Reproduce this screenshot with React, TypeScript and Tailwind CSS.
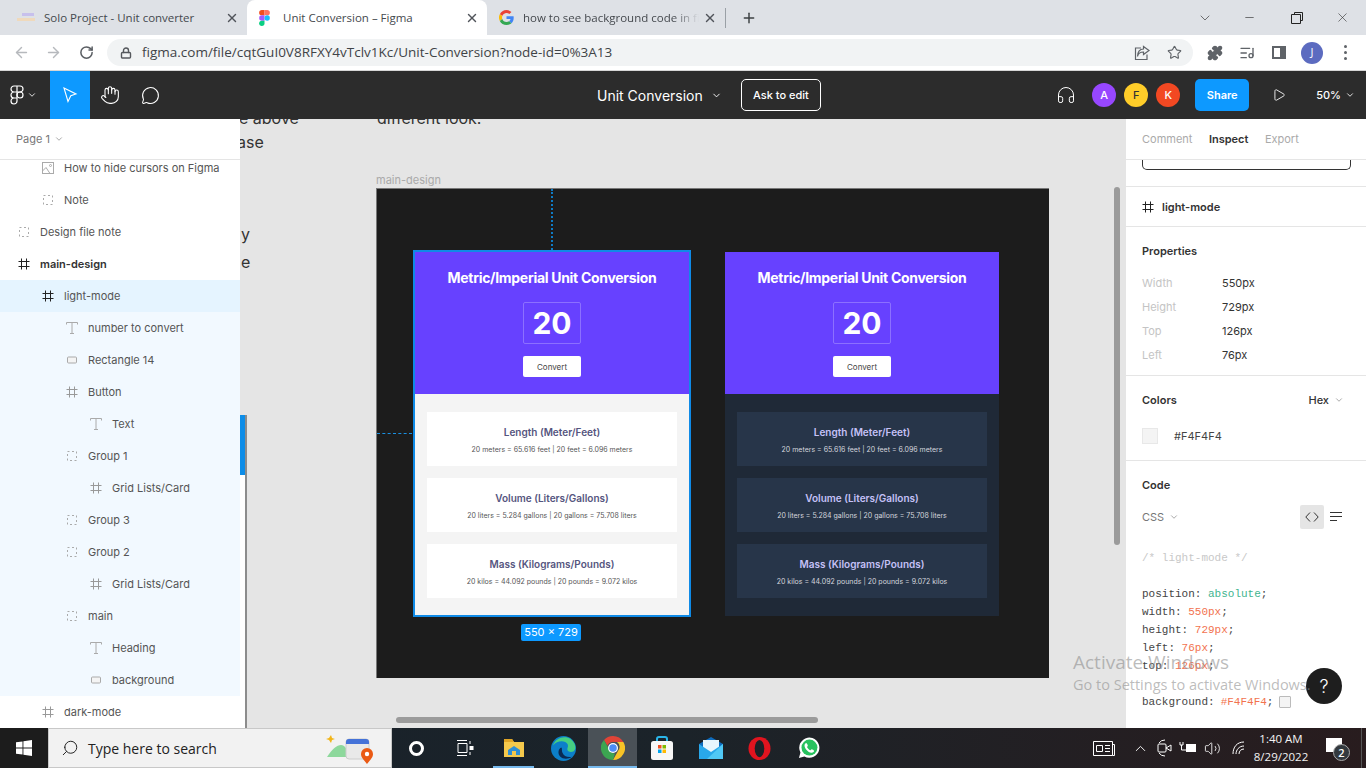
import { ArrowLeft, ArrowRight, ChevronDown, ChevronUp, Hand, Headphones, ListMusic, Lock, MessageCircle, Minus, Play, Plus, Puzzle, RotateCw, Search, Star, Volume2, X } from "lucide-react";
import type { ReactNode } from "react";

function FigmaLogo({ mono = false }: { mono?: boolean }) {
    if (mono) {
        return (
            <svg width="14" height="20" viewBox="0 0 14 20" fill="none" stroke="white" strokeWidth="1.2">
                <path d="M7 1H4a3 3 0 0 0 0 6h3zM7 1h3a3 3 0 0 1 0 6H7zM7 7H4a3 3 0 0 0 0 6h3zM7 13H4a3 3 0 1 0 3 3z" />
                <circle cx="10" cy="10" r="3" />
            </svg>
        );
    }
    return (
        <svg width="11" height="16" viewBox="0 0 12 18">
            <path d="M6 0H3a3 3 0 0 0 0 6h3z" fill="#f24e1e" />
            <path d="M6 0h3a3 3 0 0 1 0 6H6z" fill="#ff7262" />
            <path d="M6 6H3a3 3 0 0 0 0 6h3z" fill="#a259ff" />
            <circle cx="9" cy="9" r="3" fill="#1abcfe" />
            <path d="M6 12H3a3 3 0 1 0 3 3z" fill="#0acf83" />
        </svg>
    );
}

function GoogleG() {
    return (
        <svg width="15" height="15" viewBox="0 0 48 48">
            <path fill="#EA4335" d="M24 9.5c3.5 0 6.7 1.3 9.1 3.5l6.8-6.8C35.8 2.4 30.3 0 24 0 14.6 0 6.5 5.4 2.6 13.2l7.9 6.1C12.4 13.7 17.7 9.5 24 9.5z" />
            <path fill="#4285F4" d="M47 24.5c0-1.6-.2-3.2-.4-4.5H24v9h12.9c-.6 3-2.3 5.5-4.8 7.2l7.7 6C44.3 38 47 31.8 47 24.5z" />
            <path fill="#FBBC05" d="M10.5 28.7A14.5 14.5 0 0 1 10.5 19.3l-7.9-6.1a24 24 0 0 0 0 21.6z" />
            <path fill="#34A853" d="M24 48c6.5 0 11.9-2.1 15.8-5.8l-7.7-6c-2.1 1.4-4.9 2.3-8.1 2.3-6.3 0-11.6-4.2-13.5-9.8l-7.9 6.1C6.5 42.6 14.6 48 24 48z" />
        </svg>
    );
}

function Tab({ icon, title, active, fade, width, iconBox = "w-[24px]" }: { icon: ReactNode; title: string; active?: boolean; fade?: boolean; width: string; iconBox?: string }) {
    return (
        <div className={`flex items-center h-[35px] ${width} pl-[12px] pr-[8px] ${active ? "bg-white rounded-t-lg" : ""}`}>
            <div className={`${iconBox} flex shrink-0 items-center`}>{icon}</div>
            <span className={`flex-1 overflow-hidden whitespace-nowrap text-[11.5px] text-[#45494e] ${fade ? "[mask-image:linear-gradient(to_right,black_85%,transparent)]" : ""}`}>{title}</span>
            <X size={14} strokeWidth={2.4} className="text-[#50545a] ml-1 shrink-0" />
        </div>
    );
}

function Hash({ color = "#999", size = 14 }: { color?: string; size?: number }) {
    return (
        <svg width={size} height={size} viewBox="0 0 14 14" stroke={color} strokeWidth="1" fill="none">
            <path d="M4.5 1.5v11M9.5 1.5v11M1.5 4.5h11M1.5 9.5h11" />
        </svg>
    );
}

function LayerIcon({ kind }: { kind: string }) {
    if (kind === "hash") return <Hash />;
    if (kind === "hash-dark") return <Hash color="#222" />;
    if (kind === "text") {
        return (
            <svg width="14" height="14" viewBox="0 0 14 14" stroke="#aaa" fill="none">
                <path d="M1.5 3.5v-2h11v2M7 1.5v11M5 12.5h4" />
            </svg>
        );
    }
    if (kind === "rect") {
        return (
            <svg width="14" height="14" viewBox="0 0 14 14" stroke="#aaa" fill="#f4f4f4">
                <rect x="2.5" y="4" width="9" height="6" rx="1" />
            </svg>
        );
    }
    if (kind === "image") {
        return (
            <svg width="14" height="14" viewBox="0 0 14 14" stroke="#aaa" fill="none">
                <rect x="1.5" y="1.5" width="11" height="11" />
                <circle cx="9.5" cy="4.5" r="1" />
                <path d="M1.5 10 5 6.5l4 6" />
            </svg>
        );
    }
    return (
        <svg width="14" height="14" viewBox="0 0 14 14" stroke="#aaa" fill="none" strokeDasharray="2 2.5">
            <rect x="2.5" y="2.5" width="9" height="9" />
        </svg>
    );
}

const indent: Record<number, string> = { 0: "pl-[17px]", 1: "pl-[41px]", 2: "pl-[65px]", 3: "pl-[89px]" };

function LayerRow({ level, kind, name, bold, bg = "" }: { level: number; kind: string; name: string; bold?: boolean; bg?: string }) {
    return (
        <div className={`flex items-center h-[32px] gap-[9px] ${indent[level]} ${bg}`}>
            <LayerIcon kind={kind} />
            <span className={`text-[11px] ${bold ? "font-semibold text-[#333]" : "text-[#555]"}`}>{name}</span>
        </div>
    );
}

const selected = "bg-[#f2f9ff]";

function LeftPanel() {
    return (
        <aside className="w-[240px] shrink-0 bg-white flex flex-col overflow-hidden z-10">
            <div className="h-[40px] flex items-center pl-[16px] gap-[4px] text-[11px] text-[#777] shrink-0">
                Page 1 <ChevronDown size={10} className="text-[#999]" />
            </div>
            <div className="h-[1px] bg-[#e5e5e5] -mb-[8px] z-10 shrink-0" />
            <LayerRow level={1} kind="image" name="How to hide cursors on Figma" />
            <LayerRow level={1} kind="group" name="Note" />
            <LayerRow level={0} kind="group" name="Design file note" />
            <LayerRow level={0} kind="hash-dark" name="main-design" bold />
            <LayerRow level={1} kind="hash-dark" name="light-mode" bg="bg-[#e5f4ff]" />
            <LayerRow level={2} kind="text" name="number to convert" bg={selected} />
            <LayerRow level={2} kind="rect" name="Rectangle 14" bg={selected} />
            <LayerRow level={2} kind="hash" name="Button" bg={selected} />
            <LayerRow level={3} kind="text" name="Text" bg={selected} />
            <LayerRow level={2} kind="group" name="Group 1" bg={selected} />
            <LayerRow level={3} kind="hash" name="Grid Lists/Card" bg={selected} />
            <LayerRow level={2} kind="group" name="Group 3" bg={selected} />
            <LayerRow level={2} kind="group" name="Group 2" bg={selected} />
            <LayerRow level={3} kind="hash" name="Grid Lists/Card" bg={selected} />
            <LayerRow level={2} kind="group" name="main" bg={selected} />
            <LayerRow level={3} kind="text" name="Heading" bg={selected} />
            <LayerRow level={3} kind="rect" name="background" bg={selected} />
            <LayerRow level={1} kind="hash" name="dark-mode" />
        </aside>
    );
}

const conversions = [
    { title: "Length (Meter/Feet)", text: "20 meters = 65.616 feet | 20 feet = 6.096 meters" },
    { title: "Volume (Liters/Gallons)", text: "20 liters = 5.284 gallons | 20 gallons = 75.708 liters" },
    { title: "Mass (Kilograms/Pounds)", text: "20 kilos = 44.092 pounds | 20 pounds = 9.072 kilos" },
];

function DesignCard({ dark }: { dark?: boolean }) {
    return (
        <div className={`flex flex-col ${dark ? "w-[274px] h-[364px] mt-[2px]" : "w-[278px] h-[367px] border-2 border-[#0f8ae6]"}`}>
            <div className="h-[142px] shrink-0 bg-[#6741ff] flex flex-col items-center text-white">
                <h2 className="mt-[17px] text-[14px] leading-[18px] font-bold tracking-[-0.3px]">Metric/Imperial Unit Conversion</h2>
                <div className="mt-[15px] w-[58px] h-[42px] border border-[#8c70ff] rounded-[2px] flex items-center justify-center text-[30px] font-bold leading-none">20</div>
                <div className="mt-[12px] w-[58px] h-[21px] bg-white rounded-[2px] flex items-center justify-center text-[8px] text-[#444]">Convert</div>
            </div>
            <div className={`flex-1 flex flex-col gap-[12px] pt-[18px] px-[12px] ${dark ? "bg-[#1f2937]" : "bg-[#f4f4f4]"}`}>
                {conversions.map((c) => (
                    <div key={c.title} className={`h-[54px] flex flex-col items-center pt-[13px] gap-[6px] ${dark ? "bg-[#273549]" : "bg-white"}`}>
                        <div className={`text-[10px] leading-[14px] font-semibold ${dark ? "text-[#c5c1f7]" : "text-[#55557e]"}`}>{c.title}</div>
                        <div className={`text-[7px] leading-[10px] ${dark ? "text-[#d5d5de]" : "text-[#555]"}`}>{c.text}</div>
                    </div>
                ))}
            </div>
        </div>
    );
}

function Canvas() {
    return (
        <main className="relative flex-1 bg-[#e5e5e5] overflow-hidden">
            {/* bits of the note text, cut off by the panels */}
            <span className="absolute left-[-1px] top-[-13px] text-[16px] text-[#333] whitespace-nowrap">e above</span>
            <span className="absolute left-[-3px] top-[11px] text-[16px] text-[#333] whitespace-nowrap">ase</span>
            <span className="absolute left-[1px] top-[103px] text-[16px] text-[#333] whitespace-nowrap">y</span>
            <span className="absolute left-[1px] top-[131px] text-[16px] text-[#333] whitespace-nowrap">e</span>
            <span className="absolute left-[137px] top-[-13px] text-[16px] text-[#333] whitespace-nowrap">different look.</span>

            <span className="absolute left-[136px] top-[53px] text-[11px] text-[#aaa]">main-design</span>
            <div className="absolute left-[136px] top-[69px] w-[673px] h-[490px] bg-[#1c1c1c] border-t border-l border-[#777] flex items-start gap-[34px] pl-[36px] pt-[61px]">
                <DesignCard />
                <DesignCard dark />
                <div className="absolute left-[174px] top-0 h-[61px] border-l-2 border-dotted border-[#0f7bc4]" />
                <div className="absolute left-0 top-[244px] w-[35px] border-t border-dashed border-[#1a8fe0]" />
                <div className="absolute left-[144px] top-[435px] w-[60px] h-[17px] rounded-[2px] bg-[#0d99ff] text-white text-[11px] leading-[17px] text-center">550 × 729</div>
            </div>

            {/* layers panel edge + canvas scrollbars */}
            <div className="absolute left-0 top-[296px] bottom-0 w-[7px] bg-white border-r-2 border-[#8c8c8c]">
                <div className="h-[60px] w-[5px] bg-[#0d8de8]" />
            </div>
            <div className="absolute left-[156px] top-[598px] w-[422px] h-[6px] rounded-full bg-[#9b9b9b]" />
            <div className="absolute left-[874px] top-[68px] w-[6px] h-[358px] rounded-full bg-[#9b9b9b]" />
        </main>
    );
}

function PropRow({ label, value }: { label: string; value: string }) {
    return (
        <div className="flex h-[24px] items-center text-[11px]">
            <span className="w-[80px] text-[#c4c4c4]">{label}</span>
            <span className="text-[#333]">{value}</span>
        </div>
    );
}

function RightPanel() {
    return (
        <aside className="relative w-[240px] shrink-0 bg-white flex flex-col overflow-hidden">
            <div className="h-[41px] shrink-0 flex items-center gap-[16.5px] px-[16px] border-b border-[#e5e5e5] text-[11px] text-[#aaa]">
                <span>Comment</span>
                <span className="font-semibold text-[#333]">Inspect</span>
                <span>Export</span>
            </div>
            <div className="h-[27px] shrink-0 border-b border-[#e5e5e5]">
                <div className="mx-[16px] w-[209px] h-[10px] border-x border-b border-[#333] rounded-b-[5px]" />
            </div>
            <div className="h-[40px] shrink-0 flex items-center gap-[7px] pl-[15px] pt-[1px] border-b border-[#e5e5e5] text-[11px] font-semibold text-[#333]">
                <Hash color="#222" />
                <span>light-mode</span>
            </div>
            <div className="h-[149px] shrink-0 border-b border-[#e5e5e5] pl-[16px] pt-[17px]">
                <div className="text-[11px] font-semibold text-[#333] leading-[14px] mb-[13px]">Properties</div>
                <PropRow label="Width" value="550px" />
                <PropRow label="Height" value="729px" />
                <PropRow label="Top" value="126px" />
                <PropRow label="Left" value="76px" />
            </div>
            <div className="h-[85px] shrink-0 border-b border-[#e5e5e5] px-[16px] pt-[17px]">
                <div className="flex justify-between items-center text-[11px] font-semibold text-[#333] leading-[14px] pr-[6px]">
                    Colors
                    <span className="flex items-center gap-[5px] font-medium">Hex <ChevronDown size={10} className="text-[#999]" /></span>
                </div>
                <div className="flex items-center gap-[16px] mt-[21px] text-[11px] text-[#444]">
                    <div className="w-[16px] h-[16px] bg-[#f4f4f4] border border-[#e8e8e8]" />
                    #F4F4F4
                </div>
            </div>
            <div className="px-[16px] pt-[17px]">
                <div className="text-[11px] font-semibold text-[#333] leading-[14px]">Code</div>
                <div className="flex items-center mt-[13px] h-[24px] text-[11px] text-[#777]">
                    <span className="flex items-center gap-[5px]">CSS <ChevronDown size={10} className="text-[#999]" /></span>
                    <div className="ml-auto w-[24px] h-[24px] rounded-[2px] bg-[#e5e5e5] flex items-center justify-center">
                        <svg width="14" height="10" viewBox="0 0 14 10" fill="none" stroke="#333"><path d="M5 .5.8 5 5 9.5M9 .5 13.2 5 9 9.5" /></svg>
                    </div>
                    <svg className="ml-[6px] mr-[8px]" width="12" height="10" viewBox="0 0 12 10" stroke="#333"><path d="M0 .5h12M0 4.5h12M0 8.5h7" /></svg>
                </div>
                <div className="font-['Liberation_Mono',monospace] text-[11px] leading-[18px] mt-[20px] text-[#444] whitespace-nowrap">
                    <div className="text-[#c8c8c8]">/* light-mode */</div>
                    <div className="h-[18px]" />
                    <div>position: <span className="text-[#3fb58f]">absolute</span>;</div>
                    <div>width: <span className="text-[#f2734f]">550px</span>;</div>
                    <div>height: <span className="text-[#f2734f]">729px</span>;</div>
                    <div>left: <span className="text-[#f2734f]">76px</span>;</div>
                    <div>top: <span className="text-[#f2734f]">126px</span>;</div>
                    <div className="h-[18px]" />
                    <div className="flex items-center">background: <span className="text-[#f2734f] ml-[6px]">#F4F4F4</span>;<span className="ml-[6px] w-[12px] h-[12px] bg-[#f4f4f4] border border-[#bbb] rounded-[1px]" /></div>
                </div>
            </div>
        </aside>
    );
}

function Toolbar() {
    return (
        <div className="relative h-[48px] shrink-0 bg-[#2c2c2c] flex items-center text-white z-20">
            <div className="w-[50px] flex items-center pl-[10px] gap-[3px]">
                <FigmaLogo mono />
                <ChevronDown size={10} />
            </div>
            <div className="w-[40px] h-[48px] bg-[#0d99ff] flex items-center justify-center">
                <svg width="16" height="18" viewBox="0 0 16 18" fill="none" stroke="white" strokeWidth="1.1"><path d="M2 2 14 8l-5.2 1.8L6 15.5z" /></svg>
            </div>
            <div className="w-[40px] flex justify-center"><Hand size={20} strokeWidth={1.3} /></div>
            <div className="w-[40px] flex justify-center"><MessageCircle size={19} strokeWidth={1.3} /></div>
            <div className="absolute left-[597px] top-[8px] h-[32px] flex items-center">
                <span className="text-[14px] w-[114px]">Unit Conversion</span>
                <ChevronDown size={11} />
                <div className="ml-[19px] w-[80px] h-[32px] border border-white rounded-[5px] flex items-center justify-center text-[11px] font-medium">Ask to edit</div>
            </div>
            <div className="ml-auto flex items-center">
                <Headphones size={20} strokeWidth={1.2} className="mr-[16px]" />
                <div className="flex gap-[8px] text-[11px] font-medium mr-[15px]">
                    <div className="w-[24px] h-[24px] rounded-full bg-[#9747ff] flex items-center justify-center">A</div>
                    <div className="w-[24px] h-[24px] rounded-full bg-[#ffcd29] flex items-center justify-center text-[#333]">F</div>
                    <div className="w-[24px] h-[24px] rounded-full bg-[#f24822] flex items-center justify-center">K</div>
                </div>
                <div className="w-[54px] h-[32px] rounded-[5px] bg-[#0d99ff] flex items-center justify-center text-[11px] font-semibold">Share</div>
                <Play size={14} strokeWidth={1.5} className="ml-[23px] mr-[30px]" />
                <span className="text-[11px] font-medium mr-[4px]">50%</span>
                <ChevronDown size={10} className="mr-[11px]" />
            </div>
        </div>
    );
}

function BrowserChrome() {
    return (
        <div className="font-['Open_Sans',sans-serif] shrink-0">
            {/* tabs */}
            <div className="h-[35px] bg-[#dee1e6] flex items-center text-[#45494e]">
                <div className="pl-[8px] w-[247px]">
                    <Tab
                        width="w-[239px]"
                        iconBox="w-[24px] -ml-[3px] mr-[3px]"
                        title="Solo Project - Unit converter"
                        icon={<div className="w-[18px] h-[10px] flex flex-col gap-[2px]"><div className="h-[3px] w-[12px] ml-[5px] bg-[#c7c0ec]" /><div className="h-[3px] bg-[#efd9bc]" /></div>}
                    />
                </div>
                <Tab active width="w-[240px]" title="Unit Conversion – Figma" icon={<FigmaLogo />} />
                <Tab fade width="w-[238px]" title="how to see background code in figma" icon={<GoogleG />} />
                <div className="w-px h-[20px] bg-[#9aa0a6]" />
                <Plus size={16} strokeWidth={2.2} className="ml-[15px] text-[#3c4043]" />
                <div className="ml-auto flex items-center text-[#333]">
                    <ChevronDown size={16} strokeWidth={1} className="mr-[30px]" />
                    <Minus size={13} strokeWidth={1.2} className="mr-[35px]" />
                    <svg className="mr-[32px]" width="12" height="12" viewBox="0 0 12 12" fill="none" stroke="#222"><path d="M3.5 2.5v-2h8v8h-2M.5 2.5h9v9h-9z" /></svg>
                    <X size={15} strokeWidth={1} className="mr-[16px]" />
                </div>
            </div>
            {/* address bar */}
            <div className="h-[36px] bg-white flex items-center border-b border-[#d6d6d6] text-[#5f6368]">
                <ArrowLeft size={17} className="ml-[13px] text-[#b6b9bd]" />
                <ArrowRight size={17} className="ml-[15px] text-[#b6b9bd]" />
                <RotateCw size={15} strokeWidth={2.4} className="ml-[17px] text-[#5a5e63]" />
                <div className="ml-[13px] w-[1086px] h-[27px] bg-[#f1f3f4] rounded-full flex items-center pl-[13px]">
                    <Lock size={12} strokeWidth={2.8} className="mr-[10px] text-[#55585d]" />
                    <span className="text-[13.5px] text-[#3f4347] whitespace-nowrap">figma.com/file/cqtGuI0V8RFXY4vTclv1Kc/Unit-Conversion?node-id=0%3A13</span>
                    <svg className="ml-auto mr-[17px]" width="16" height="16" viewBox="0 0 16 16" fill="none" stroke="#5f6368" strokeWidth="1.2">
                        <path d="M7 3H1.5v11.500H13V9.500M9.500 1.500 15 5.500 9.500 9.500V7C6 7 4 9 3.500 11.500 3.500 7 5.500 4 9.500 4z" />
                    </svg>
                    <Star size={15} strokeWidth={1.8} className="mr-[11px]" />
                </div>
                <Puzzle size={16} fill="#5f6368" className="ml-[14px]" />
                <ListMusic size={16} className="ml-[16px]" />
                <div className="ml-[17px] w-[14px] h-[13px] border-2 border-[#5f6368] border-r-[6px]" />
                <div className="ml-[15px] w-[22px] h-[22px] rounded-full bg-[#5c6bc0] text-white text-[11px] flex items-center justify-center">J</div>
                <div className="ml-[21px] flex flex-col gap-[3px]">
                    <div className="w-[3px] h-[3px] rounded-full bg-[#5f6368]" />
                    <div className="w-[3px] h-[3px] rounded-full bg-[#5f6368]" />
                    <div className="w-[3px] h-[3px] rounded-full bg-[#5f6368]" />
                </div>
            </div>
        </div>
    );
}

function TaskbarApp({ children, active, open }: { children: ReactNode; active?: boolean; open?: boolean }) {
    return (
        <div className={`relative w-[49px] h-[40px] flex items-center justify-center ${active ? "bg-[#4a5157]" : ""}`}>
            {children}
            {(active || open) && <div className={`absolute bottom-0 h-[2px] bg-[#76b9ed] ${active ? "inset-x-0" : "inset-x-[4px]"}`} />}
        </div>
    );
}

function Taskbar() {
    return (
        <div className="relative h-[40px] shrink-0 flex items-center bg-gradient-to-r from-[#18212b] via-[#1b2329] to-[#281c1e] text-white font-['Open_Sans',sans-serif] z-20">
            <div className="w-[48px] h-full bg-[#1c1c1c] flex items-center justify-center">
                <svg width="16" height="16" viewBox="0 0 16 16" fill="white"><path d="M0 2.3 6.5 1.4V7.5H0zM7.4 1.3 16 0v7.5H7.4zM0 8.4h6.5v6.2L0 13.7zM7.4 8.4H16V16L7.4 14.7z" /></svg>
            </div>
            <div className="w-[344px] h-[40px] bg-[#f2f2f2] border border-[#c8c8c8] flex items-center pl-[12px] text-[#222]">
                <Search size={18} strokeWidth={1.3} className="-scale-x-100" />
                <span className="ml-[9px] text-[14px]">Type here to search</span>
                {/* weather/calendar widget */}
                <svg className="ml-auto mr-[15px]" width="50" height="32" viewBox="0 0 50 32">
                    <path d="M3 6l2-3 1 3 3 1-3 1-1 3-2-3-3-1z" fill="#f2b519" />
                    <path d="M1 25c5-8 10-12 14-12 4 0 6 4 9 12z" fill="#8dd89c" />
                    <rect x="20" y="7" width="23" height="20" rx="3" fill="#e9e9e9" stroke="#ccc" />
                    <path d="M20 12V10a3 3 0 0 1 3-3h17a3 3 0 0 1 3 3v2z" fill="#4472d8" />
                    <path d="M41 32c-4-5-6-7-6-10a6 6 0 0 1 12 0c0 3-2 5-6 10z" fill="#ea5a14" />
                    <circle cx="41" cy="22" r="2.2" fill="white" />
                </svg>
            </div>
            <div className="w-[48px] flex justify-center">
                <div className="w-[15px] h-[15px] rounded-full border-[3px] border-white" />
            </div>
            <div className="w-[49px] flex justify-center">
                <svg width="18" height="18" viewBox="0 0 18 18" fill="none" stroke="white"><path d="M1 1.5h10M1 16.5h10M2 4.5h9v9H2zM14 2v3M14 13v3" /><rect x="14" y="7.5" width="3" height="3" fill="white" /></svg>
            </div>
            <TaskbarApp open>
                <svg width="22" height="20" viewBox="0 0 22 20"><path d="M1 1h8l2 3h10v15H1z" fill="#f5c94c" /><path d="M1 1h8l2 3H1z" fill="#e0a526" /><path d="M11 8l6 4v5H5v-5z" fill="#2f8fd5" /><rect x="9" y="13" width="4" height="4" fill="#f5c94c" /></svg>
            </TaskbarApp>
            <div className="w-[1px]" />
            <TaskbarApp>
                <svg width="25" height="25" viewBox="0 0 24 24">
                    <circle cx="12" cy="12" r="12" fill="#0c7fc9" />
                    <path d="M2 9C4 2 13-1 19 3c4 3 5 7 4 10-1 3-6 3-7 1-1-3 1-3 0-6-2-4-10-4-14 1z" fill="#46cf82" />
                    <path d="M10 11c-3 1-4 6-1 9 2 2 7 3 11 0-4 1-8-1-9-4-1-2 0-4-1-5z" fill="#0a2a52" />
                </svg>
            </TaskbarApp>
            <TaskbarApp active>
                <svg width="24" height="24" viewBox="0 0 24 24">
                    <path d="M12 0a12 12 0 0 1 10.4 6H12a6 6 0 0 0-5.6 3.8L3 4a12 12 0 0 1 9-4z" fill="#e04437" />
                    <path d="M22.4 6A12 12 0 0 1 12 24l5-9a6 6 0 0 0-1-9z" fill="#f7c326" />
                    <path d="M12 24A12 12 0 0 1 3 4l5.5 10A6 6 0 0 0 14 17.5z" fill="#3ca551" />
                    <circle cx="12" cy="12" r="5" fill="white" />
                    <circle cx="12" cy="12" r="3.8" fill="#4d8cf5" />
                </svg>
            </TaskbarApp>
            <TaskbarApp>
                <svg width="22" height="24" viewBox="0 0 22 24" fill="none">
                    <path d="M6 6V3a2 2 0 0 1 2-2h6a2 2 0 0 1 2 2v3" stroke="#2ab5e8" strokeWidth="2" />
                    <rect x="0" y="5" width="22" height="19" rx="2.5" fill="#f7f7f7" />
                    <rect x="7" y="9" width="3.5" height="3.5" fill="#f25022" />
                    <rect x="11.5" y="9" width="3.5" height="3.5" fill="#7fba00" />
                    <rect x="7" y="13.5" width="3.5" height="3.5" fill="#00a4ef" />
                    <rect x="11.5" y="13.5" width="3.5" height="3.5" fill="#ffb900" />
                </svg>
            </TaskbarApp>
            <TaskbarApp>
                <svg width="24" height="22" viewBox="0 0 24 22">
                    <path d="M0 7 12 0l12 7v15H0z" fill="#0f6cbd" />
                    <path d="M4 3h16v8l-8 5-8-5z" fill="#e8f6fd" />
                    <path d="M0 7l12 8 12-8v15H0z" fill="#29a8ea" />
                    <path d="M24 7v15H8z" fill="#50c8f5" />
                </svg>
            </TaskbarApp>
            <TaskbarApp>
                <svg width="23" height="23" viewBox="0 0 24 24">
                    <ellipse cx="12" cy="12" rx="11.5" ry="12" fill="#e0141f" />
                    <ellipse cx="12" cy="12" rx="5" ry="9" fill="#1c2228" />
                </svg>
            </TaskbarApp>
            <TaskbarApp>
                <svg width="22" height="22" viewBox="0 0 24 24">
                    <path d="M1 23l1.700-6A11 11 0 1 1 7 21.300z" fill="#fff" />
                    <circle cx="12.5" cy="11.5" r="8.7" fill="#28c25f" />
                    <path d="M9 6.5c-.7 0-1.900 1-1.900 2.700 0 3 3.700 7.500 7.500 8 1.700.2 3-1.200 3-2.200 0-.6-2.500-2-2.900-1.700l-1 1.200c-1.500-.3-3.300-2-3.900-3.600l.9-1.100C10.900 9.300 9.700 6.500 9 6.500z" fill="#fff" />
                </svg>
            </TaskbarApp>
            {/* tray */}
            <div className="ml-auto flex items-center">
                <svg width="24" height="17" viewBox="0 0 24 17" fill="none" stroke="white"><path d="M1.5 1.5h19v14h-19zM20.5 4.5h2v11h-2M4.5 5.5h6v6h-6zM13 5.5h5M13 8.5h5M13 11.5h5" /></svg>
                <ChevronUp size={17} strokeWidth={1.3} className="ml-[16px]" />
                <svg className="ml-[8px]" width="15" height="18" viewBox="0 0 15 18" fill="none" stroke="white"><path d="M2 4a7 7 0 0 1 6-3M2 14a7 7 0 0 0 6 3" /><rect x="1" y="5" width="8" height="8" rx="1" /><path d="M9 9l5-3v6z" /></svg>
                <svg className="ml-[7px]" width="18" height="14" viewBox="0 0 18 14"><path d="M1 1v3h3V1M2.5 4v5H7" fill="none" stroke="white" /><rect x="7" y="3" width="10" height="8" fill="white" /></svg>
                <Volume2 size={17} strokeWidth={1.2} className="ml-[7px]" />
                <svg className="ml-[11px]" width="13" height="14" viewBox="0 0 13 14" fill="none" stroke="white"><path d="M1 13C1 6 5 1 12 1M4 13c0-4 3-8 8-8M7 13c0-3 2-5 5-5" /></svg>
                <div className="w-[64px] ml-[4px] text-center text-[11.5px] leading-[18px] text-[#f3f3f3]">
                    <div>1:40 AM</div>
                    <div>8/29/2022</div>
                </div>
                <div className="relative ml-[13px] mr-[20px] w-[20px] h-[20px]">
                    <div className="w-[16px] h-[14px] bg-white" />
                    <div className="absolute left-[7px] top-[6px] w-[17px] h-[17px] rounded-full bg-[#33393e] border border-[#aaa] text-[11px] font-semibold leading-[15px] text-center">2</div>
                </div>
            </div>
            <div className="absolute right-[4px] top-0 bottom-0 w-px bg-[#555]" />
        </div>
    );
}

export default function App() {
    return (
        <div className="relative w-[1366px] h-[768px] overflow-hidden flex flex-col bg-white font-['Inter',sans-serif]">
            <BrowserChrome />
            <Toolbar />
            {/* workspace */}
            <div className="flex flex-1 min-h-0">
                <LeftPanel />
                <Canvas />
                <RightPanel />
            </div>
            <Taskbar />

            {/* help button + activation watermark sit above everything */}
            <div className="absolute left-[1306px] top-[668px] w-[36px] h-[36px] rounded-full bg-[#1e1e1e] text-white flex items-center justify-center text-[18px] font-light">?</div>
            <div className="absolute left-[1073px] top-[650px] font-['Open_Sans',sans-serif] text-[#8f8f8f]/60 whitespace-nowrap pointer-events-none">
                <div className="text-[19px] leading-[24px]">Activate Windows</div>
                <div className="text-[14.5px] leading-[22px]">Go to Settings to activate Windows.</div>
            </div>
        </div>
    );
}
